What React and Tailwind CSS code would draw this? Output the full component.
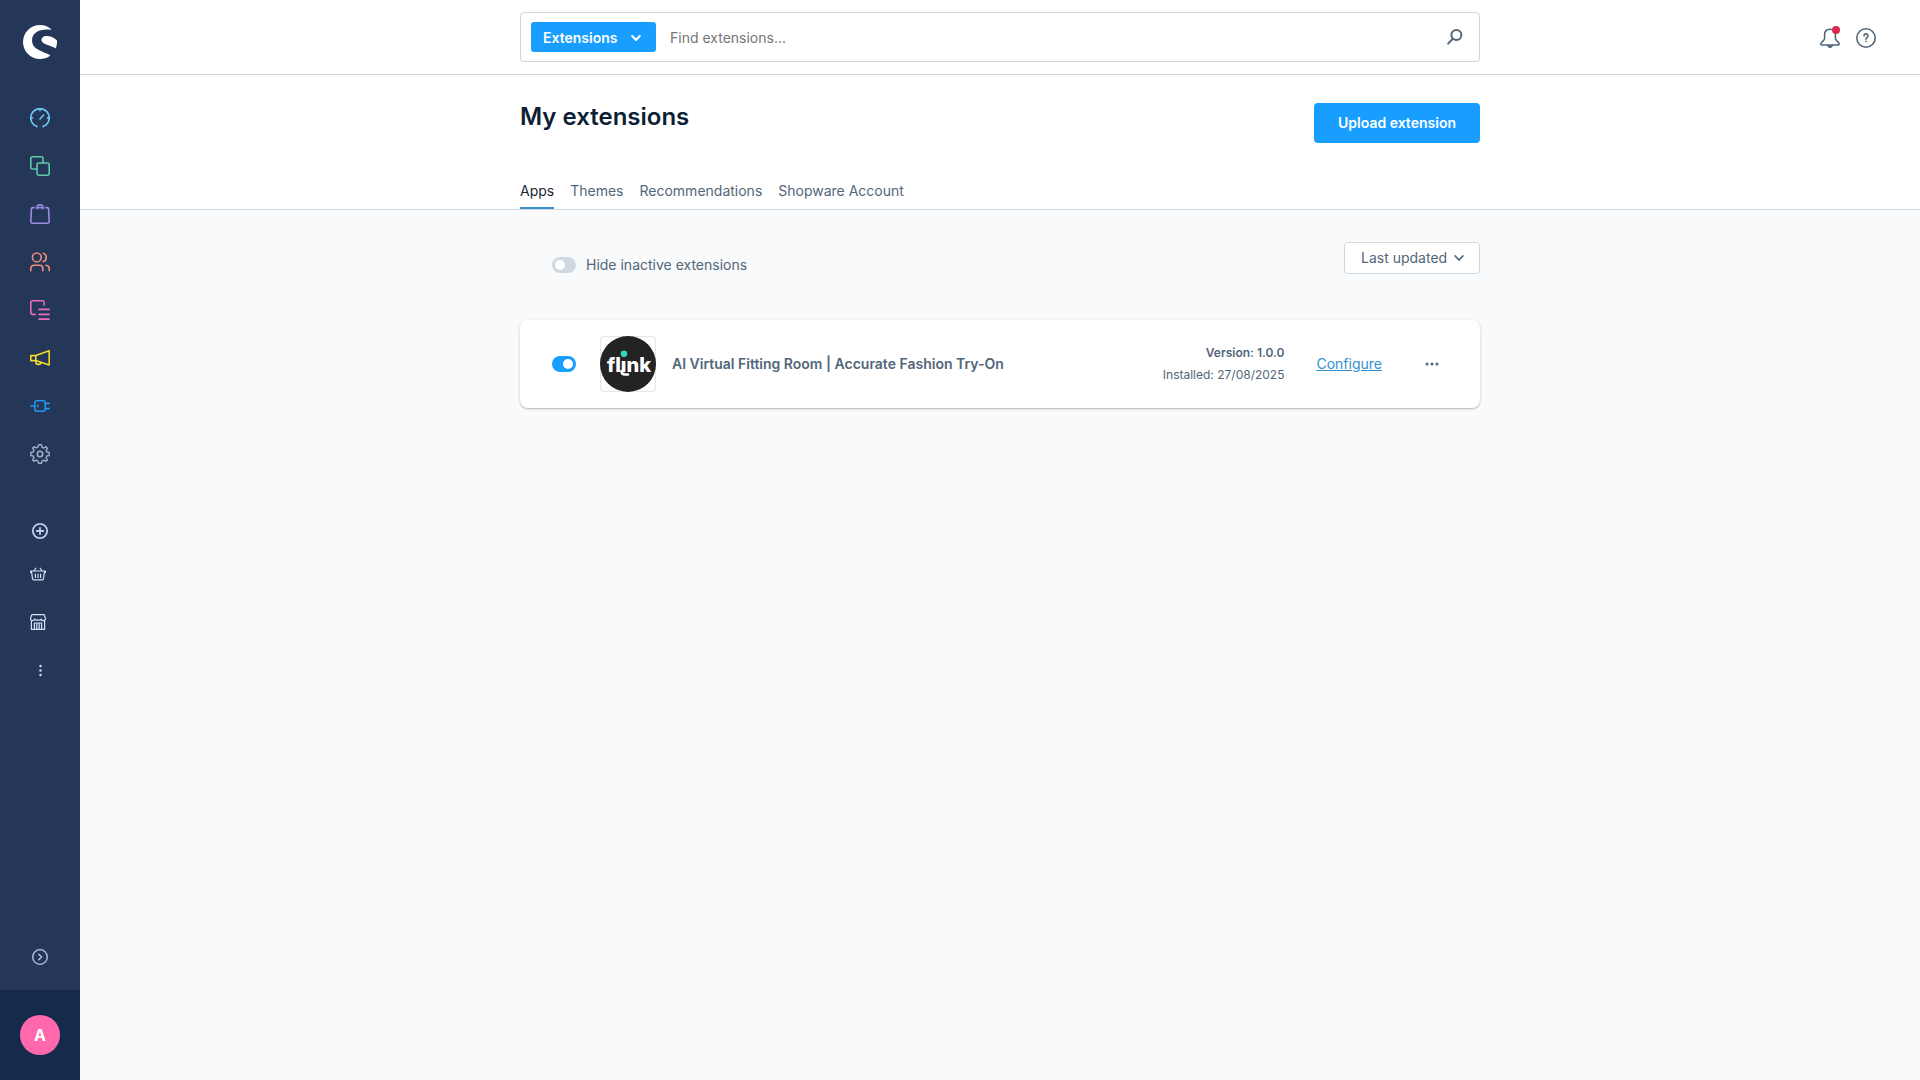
import React from "react";
import { SiShopware } from "react-icons/si";

const Icon = ({ size = 20, box = 20, width = 1.6, children, className = "" }) => (
  <svg
    width={size}
    height={size}
    viewBox={`0 0 ${box} ${box}`}
    fill="none"
    stroke="currentColor"
    strokeWidth={width}
    strokeLinecap="round"
    strokeLinejoin="round"
    aria-hidden="true"
    className={className}
  >
    {children}
  </svg>
);

const mainNav = [
  {
    label: "Dashboard",
    color: "text-[#6ccaf0]",
    icon: (
      <path d="M7 18.6 C6.6 17.6 5.6 18 4.2 17.2 A9.3 9.3 0 1 1 15.8 17.2 C14.4 18 13.4 17.6 13 18.6 M10 .8 V2.8 M.8 10 H2.6 M17.4 10 H19.2 M10 11 L13.6 7" />
    ),
  },
  {
    label: "Catalogues",
    color: "text-[#5fc9a4]",
    icon: (
      <>
        <rect x="7" y="7" width="12.2" height="12.2" rx="1.6" />
        <path d="M6.8 13 H2.4 A1.6 1.6 0 0 1 .8 11.4 V2.4 A1.6 1.6 0 0 1 2.4 .8 H11.4 A1.6 1.6 0 0 1 13 2.4 V6.8" />
      </>
    ),
  },
  {
    label: "Orders",
    color: "text-[#9c8ce0]",
    icon: (
      <path d="M4.4 3.6 H2.8 A1.4 1.4 0 0 0 1.4 4.9 L.8 17.8 A1.4 1.4 0 0 0 2.2 19.2 H17.8 A1.4 1.4 0 0 0 19.2 17.8 L18.6 4.9 A1.4 1.4 0 0 0 17.2 3.6 H15.6 M7 4.8 V3 A2 2 0 0 1 9 .9 H11 A2 2 0 0 1 13 3 V4.8 M7 3.6 H13" />
    ),
  },
  {
    label: "Customers",
    color: "text-[#ee8c7c]",
    icon: (
      <>
        <circle cx="6.8" cy="5.4" r="4.4" />
        <path d="M.8 18.8 V16.4 A3.2 3.2 0 0 1 4 13.2 H9.6 A3.2 3.2 0 0 1 12.8 16.4 V18.8 M13.2 1.2 A4.4 4.4 0 0 1 13.2 9.6 M16 13.2 A3.6 3.6 0 0 1 19.2 16.8 V18.8" />
      </>
    ),
  },
  {
    label: "Content",
    color: "text-[#ea6bc0]",
    icon: (
      <path d="M5.2 14.4 H2.4 A1.6 1.6 0 0 1 .8 12.8 V2.4 A1.6 1.6 0 0 1 2.4 .8 H12.6 A1.6 1.6 0 0 1 14.2 2.4 V5 M9 9.4 H19.2 M9 14.4 H19.2 M9 19.1 H19.2" />
    ),
  },
  {
    label: "Marketing",
    color: "text-[#f0dc28]",
    icon: (
      <path d="M.8 7.6 H5.8 L19.2 2.8 V17 L5.8 12.6 H.8 Z M5.8 7.6 V12.6 M6 13 V14.6 A1.8 1.8 0 0 0 7.8 16.4 H9 A1.8 1.8 0 0 0 10.8 14.6" />
    ),
  },
  {
    label: "Extensions",
    color: "text-[#2497ee]",
    icon: (
      <path d="M.8 10 H4.8 M7 4.8 H13.6 A1.6 1.6 0 0 1 15.2 6.4 V13.6 A1.6 1.6 0 0 1 13.6 15.2 H7 A2 2 0 0 1 4.8 13 V7 A2 2 0 0 1 7 4.8 Z M15.2 7.4 H19.2 M15.2 12.6 H19.2 M7.8 9.2 V10.8" />
    ),
  },
  {
    label: "Settings",
    color: "text-[#9db0cb]",
    icon: (
      <>
        <circle cx="10" cy="10" r="2.7" />
        <path d="M8.5 .8 H11.5 L12.1 3.3 L13.8 4 L16 2.7 L17.5 4.4 L16.1 6.3 L16.8 8 L19.2 8.5 V11.5 L16.8 12 L16.1 13.8 L17.4 15.9 L15.7 17.4 L13.8 16.1 L12.1 16.8 L11.5 19.2 H8.5 L7.9 16.8 L6.2 16.1 L4.1 17.4 L2.6 15.8 L3.9 13.8 L3.2 12 L.8 11.5 V8.5 L3.2 8 L3.9 6.2 L2.6 4.2 L4.2 2.6 L6.2 3.9 L7.9 3.2 Z" strokeWidth="1.4" />
      </>
    ),
  },
];

function Sidebar() {
  return (
    <aside className="flex w-20 shrink-0 flex-col bg-[#253759]">
      <a href="#home" aria-label="Home" className="flex h-[84px] items-center justify-center text-white">
        <SiShopware size={34} />
      </a>
      <nav aria-label="Main" className="mt-2.5 flex flex-col">
        {mainNav.map((n) => (
          <a key={n.label} href="#nav" aria-label={n.label} className={`flex h-12 items-center justify-center ${n.color}`}>
            <Icon>{n.icon}</Icon>
          </a>
        ))}
      </nav>
      <nav aria-label="Shortcuts" className="mt-[30px] flex flex-col text-[#d3e0f5]">
        <a href="#add" aria-label="Add sales channel" className="flex h-[46px] items-center justify-center text-[#b9cbef]">
          <Icon size={16} box={16} width={1.8}>
            <circle cx="8" cy="8" r="7.1" />
            <path d="M8 4.8 V11.2 M4.8 8 H11.2" />
          </Icon>
        </a>
        <a href="#storefront" aria-label="Storefront" className="flex h-10 items-center pl-[30px]">
          <Icon size={16} box={16} width={1.2}>
            <path d="M.6 5 H15.4 M1.4 5 L2.6 13 A1 1 0 0 0 3.6 13.9 H12.4 A1 1 0 0 0 13.4 13 L14.6 5 M.6 5 V6.6 M15.4 5 V6.6 M4 5 L5.8 2.2 M12 5 L10.2 2.2 M5.4 8 V11.4 M8 8 V11.4 M10.6 8 V11.4" />
          </Icon>
        </a>
        <a href="#store" aria-label="Store" className="mt-1 flex h-12 items-center pl-[30px]">
          <Icon size={16} box={16} width={1.2}>
            <path d="M1.4 6.6 V15.4 H14.6 V6.6 M2 .6 H14 L15.4 4 A2.1 2.1 0 0 1 11.2 5 A2.1 2.1 0 0 1 8 5.8 A2.1 2.1 0 0 1 4.8 5 A2.1 2.1 0 0 1 .6 4 Z M4.4 15.4 V9 H11.6 V15.4 M6.8 9 V15.4 M9.2 9 V15.4" />
          </Icon>
        </a>
        <button type="button" aria-label="More" className="flex h-12 items-center justify-center">
          <svg width="16" height="16" viewBox="0 0 16 16" fill="currentColor" aria-hidden="true">
            <circle cx="8.5" cy="4" r="1.2" />
            <circle cx="8.5" cy="8.5" r="1.2" />
            <circle cx="8.5" cy="13" r="1.2" />
          </svg>
        </button>
      </nav>
      <button type="button" aria-label="Expand menu" className="mt-auto mb-[17px] flex h-8 items-center justify-center text-[#b9cbef]">
        <Icon size={16} box={16} width={1.3}>
          <circle cx="8" cy="8" r="7.3" />
          <path d="M6.8 5.2 L9.6 8 L6.8 10.8" />
        </Icon>
      </button>
      <div className="flex h-[90px] items-center justify-center bg-[#162a4c]">
        <button type="button" aria-label="User A" className="size-10 rounded-full bg-[#ff68ac] text-base font-bold text-white">
          A
        </button>
      </div>
    </aside>
  );
}

function TopBar() {
  return (
    <header className="grid grid-cols-[1fr_minmax(0,960px)_1fr] border-b border-[#d1d5db] bg-white py-3">
      <div />
      <div className="flex h-[50px] items-center rounded border border-[#d1d5db] pr-4 pl-2.5">
        <button type="button" className="flex h-[30px] w-[125px] items-center justify-between rounded-[3px] bg-[#189eff] pt-px pr-[15px] pl-3 text-sm font-semibold text-white">
          Extensions
          <Icon size={10} box={10} width={2}>
            <path d="M1.2 3 L5 7 L8.8 3" />
          </Icon>
        </button>
        <input
          type="text"
          aria-label="Find extensions"
          placeholder="Find extensions..."
          className="h-full min-w-0 flex-1 pl-3.5 text-sm outline-none placeholder:text-[#757575]"
        />
        <button type="button" aria-label="Search" className="text-[#52667a]">
          <Icon size={16} box={16} width={2}>
            <circle cx="9.4" cy="6" r="5" />
            <path d="M5.8 9.8 L1.2 14.6" />
          </Icon>
        </button>
      </div>
      <div className="flex items-center justify-end gap-4 pt-0.5 pr-11 text-[#52667a]">
        <button type="button" aria-label="Notifications" className="relative">
          <Icon width={1.6}>
            <path d="M10 1.2 C6.6 1.2 4.6 3.4 4.6 6.6 V10.6 C4.6 12.6 .8 14.2 .8 16 C.8 16.6 1.2 17 1.8 17 H18.2 C18.8 17 19.2 16.6 19.2 16 C19.2 14.2 15.4 12.6 15.4 10.6 V6.6 C15.4 3.4 13.4 1.2 10 1.2 Z" />
            <path d="M7.8 17.6 A2.3 2.3 0 0 0 12.2 17.6" fill="currentColor" />
          </Icon>
          <span className="absolute -top-0.5 right-0 size-2 rounded-full bg-[#de294c]" />
        </button>
        <button type="button" aria-label="Help">
          <Icon width={1.6}>
            <circle cx="10" cy="10" r="9.2" />
            <path d="M8 8 A2 2 0 1 1 10.8 9.7 C10.2 10.1 10 10.4 10 11.2 M10 13.4 V13.5" />
          </Icon>
        </button>
      </div>
    </header>
  );
}

const tabs = ["Apps", "Themes", "Recommendations", "Shopware Account"];

function PageHead() {
  return (
    <div className="border-b border-[#d1d9e0] bg-white">
      <div className="mx-auto flex max-w-[960px] flex-col">
        <div className="flex h-[97px] items-start justify-between pt-7">
          <h1 className="-mt-0.5 text-2xl font-semibold text-[#0d1f35]">My extensions</h1>
          <button type="button" className="h-10 w-[166px] rounded bg-[#189eff] text-sm font-semibold text-white">
            Upload extension
          </button>
        </div>
        <nav aria-label="Extension types" className="flex gap-4 text-sm">
          {tabs.map((t, i) => (
            <a
              key={t}
              href="#tab"
              aria-current={i === 0 ? "page" : undefined}
              className={`flex h-[37px] items-center border-b-2 pt-0.5 ${i === 0 ? "border-[#3a8fcf] text-[#1a2533]" : "border-transparent text-[#52667a]"}`}
            >
              {t}
            </a>
          ))}
        </nav>
      </div>
    </div>
  );
}

const Toggle = ({ id, label, defaultChecked }) => (
  <input
    id={id}
    type="checkbox"
    role="switch"
    aria-label={label}
    defaultChecked={defaultChecked}
    className="flex h-4 w-6 shrink-0 appearance-none items-center rounded-full bg-[#d1d9e0] px-[3px] before:size-2.5 before:rounded-full before:bg-white checked:justify-end checked:bg-[#189eff]"
  />
);

const FlinkLogo = () => (
  <svg width="56" height="56" viewBox="0 0 56 56" role="img" aria-label="flink">
    <circle cx="28" cy="28" r="28" fill="#232323" />
    <text x="7" y="36" fontSize="20" fontWeight="800" fill="#fff">
      flınk
    </text>
    <path d="M21.5 35 Q21.5 38.5 25 38.5 H28" fill="none" stroke="#fff" strokeWidth="2.6" strokeLinecap="round" />
    <circle cx="24" cy="17.8" r="3.3" fill="#2ed8b6" />
  </svg>
);

function ExtensionCard() {
  return (
    <article className="mt-[45px] flex h-[88px] items-center rounded-lg bg-white pr-10 pl-8 shadow-[0_1px_3px_rgba(0,0,0,0.18),0_1px_1px_rgba(0,0,0,0.12)]">
      <Toggle label="Activate AI Virtual Fitting Room" defaultChecked />
      <div className="ml-6 size-14 rounded border border-[#e5e7eb]">
        <div className="-m-px">
          <FlinkLogo />
        </div>
      </div>
      <h2 className="ml-4 flex-1 text-sm font-semibold text-[#52667a]">AI Virtual Fitting Room | Accurate Fashion Try-On</h2>
      <div className="text-right text-xs leading-[22px] text-[#52667a]">
        <p className="font-semibold">Version: 1.0.0</p>
        <p>Installed: 27/08/2025</p>
      </div>
      <a href="#configure" className="ml-8 text-sm text-[#3390cc] underline">
        Configure
      </a>
      <button type="button" aria-label="Extension actions" className="ml-[42px] text-[#52667a]">
        <svg width="16" height="16" viewBox="0 0 16 16" fill="currentColor" aria-hidden="true">
          <circle cx="3" cy="8" r="1.5" />
          <circle cx="8" cy="8" r="1.5" />
          <circle cx="13" cy="8" r="1.5" />
        </svg>
      </button>
    </article>
  );
}

export default function App() {
  return (
    <div className="flex min-h-screen bg-[#f9fafb] font-['Inter',sans-serif]">
      <Sidebar />
      <div className="flex min-w-0 flex-1 flex-col">
        <TopBar />
        <PageHead />
        <main className="mx-auto w-full max-w-[960px] pt-8">
          <div className="flex items-start justify-between">
            <div className="flex items-center gap-2.5 pt-[13px] pl-8">
              <Toggle id="hide-inactive" label="Hide inactive extensions" />
              <label htmlFor="hide-inactive" className="text-sm text-[#52667a]">
                Hide inactive extensions
              </label>
            </div>
            <div className="relative flex items-center text-[#52667a]">
              <select
                aria-label="Sort by"
                className="h-8 w-[136px] appearance-none rounded border border-[#d1d9e0] bg-white pl-4 text-sm"
              >
                <option>Last updated</option>
                <option>Name</option>
              </select>
              <Icon size={10} box={10} width={1.8} className="pointer-events-none absolute right-4">
                <path d="M1.2 3 L5 7 L8.8 3" />
              </Icon>
            </div>
          </div>
          <ExtensionCard />
        </main>
      </div>
    </div>
  );
}
